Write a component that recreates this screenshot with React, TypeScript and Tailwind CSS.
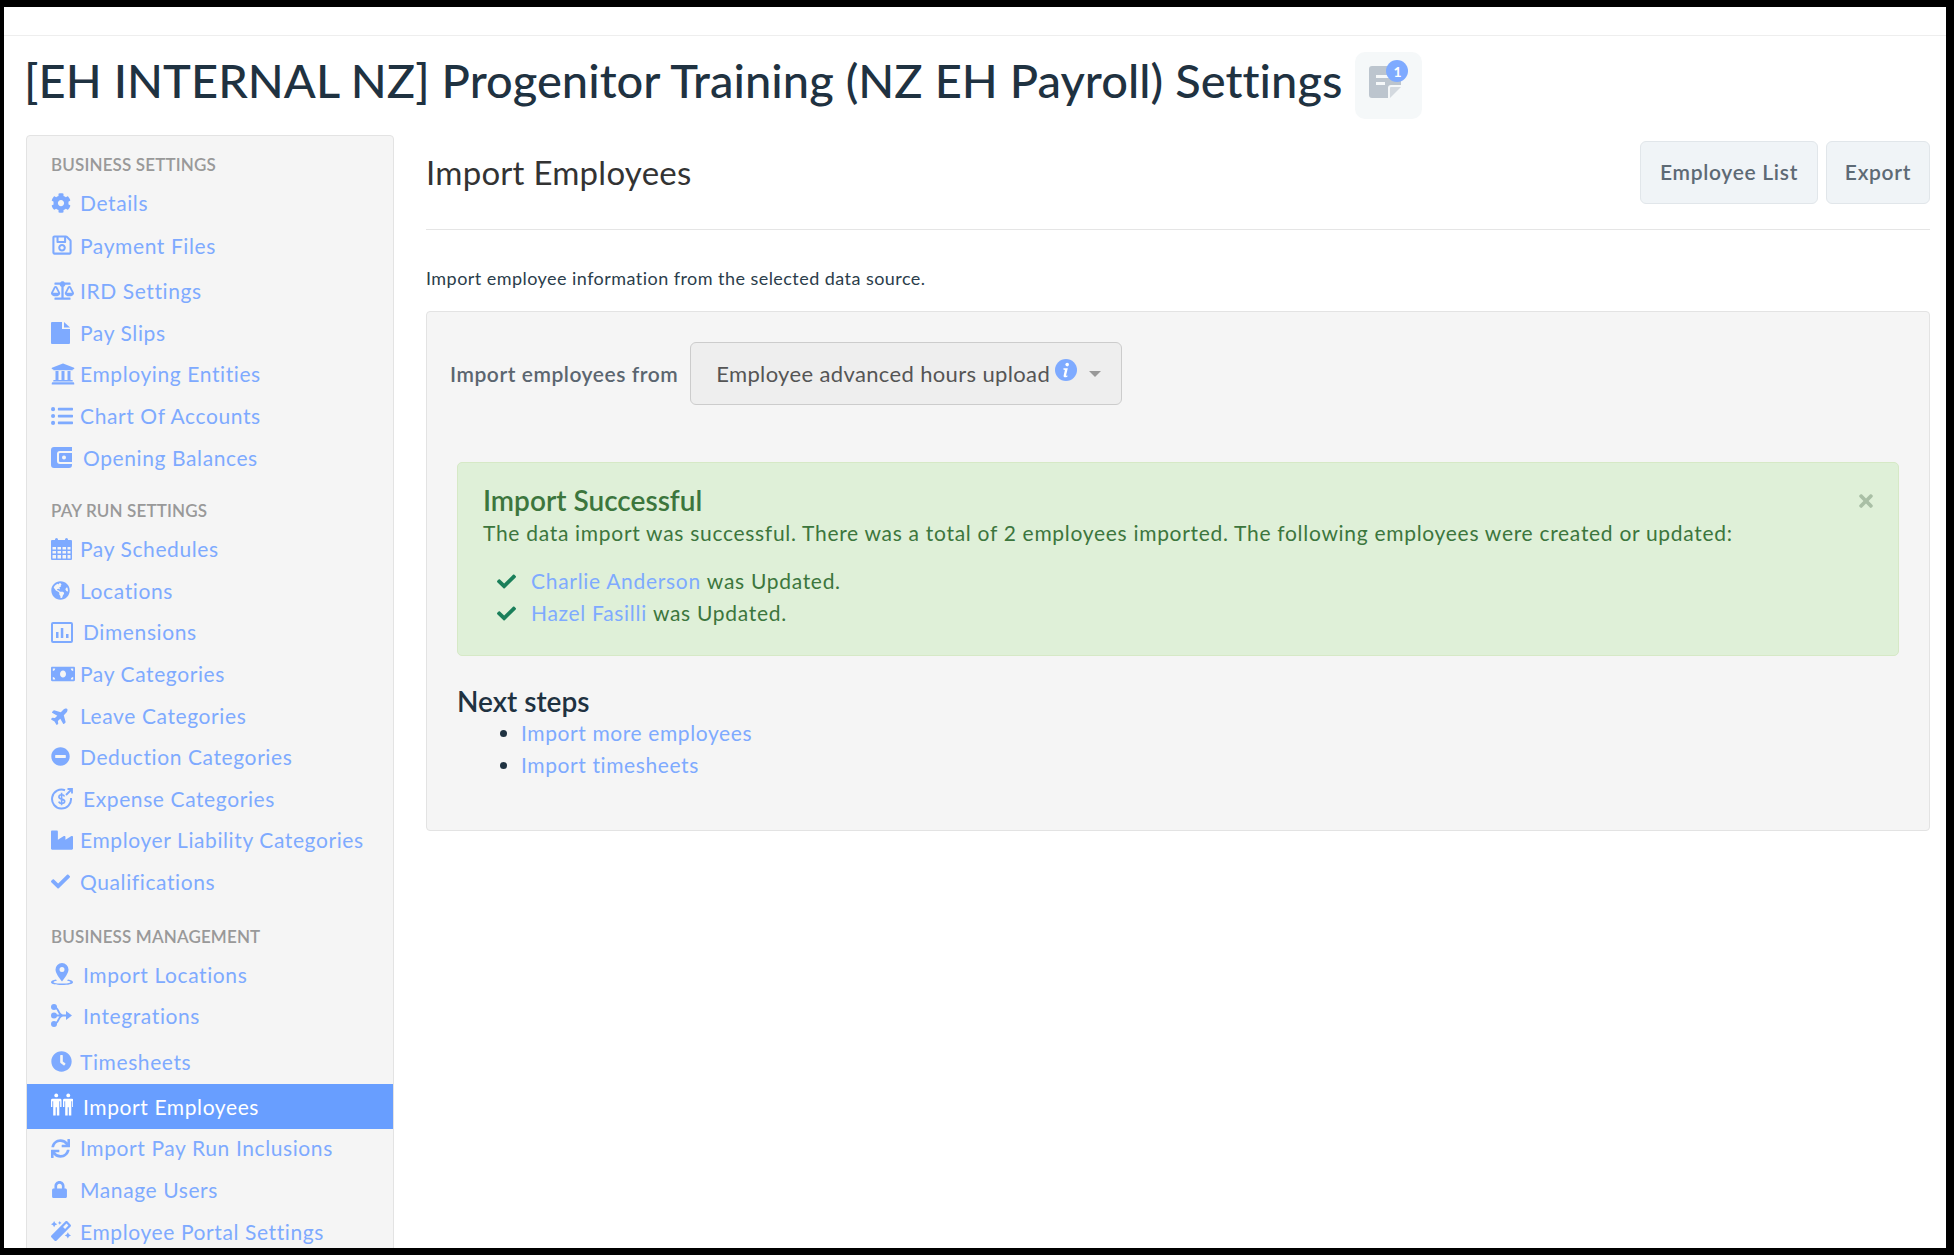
import type { ReactNode } from "react";
import {
  FaBalanceScale,
  FaCheck,
  FaClock,
  FaCog,
  FaGlobeAmericas,
  FaIndustry,
  FaListUl,
  FaLock,
  FaMagic,
  FaMinusCircle,
  FaMoneyBill,
  FaPlane,
  FaRegSave,
  FaSync,
  FaTimes,
  FaUniversity,
} from "react-icons/fa";

// icons the packs don't have in the same shape
function FileIcon() {
  return (
    <svg viewBox="0 0 19 22" className="h-[22px] w-[19px] fill-current">
      <path d="M1 0h10v7h8v14a1 1 0 0 1-1 1H1a1 1 0 0 1-1-1V1a1 1 0 0 1 1-1z" />
      <path d="M13 0l6 5.5h-6z" />
    </svg>
  );
}

function WalletIcon() {
  return (
    <svg viewBox="0 0 21 21" className="h-[21px] w-[21px] fill-current">
      <path
        fillRule="evenodd"
        d="M3 0h18v4H9a3 3 0 0 0-3 3v7a3 3 0 0 0 3 3h12v1a3 3 0 0 1-3 3H3a3 3 0 0 1-3-3V3a3 3 0 0 1 3-3z"
      />
      <path
        fillRule="evenodd"
        d="M9 6h12v9H9a1 1 0 0 1-1-1V7a1 1 0 0 1 1-1zm4 2.5a2 2 0 1 0 0 4 2 2 0 0 0 0-4z"
      />
    </svg>
  );
}

function CalendarIcon() {
  return (
    <svg viewBox="0 0 21 22" className="h-[22px] w-[21px] fill-current">
      <path
        fillRule="evenodd"
        d="M1 2h3V1.500a1.500 1.500 0 0 1 3 0V2h7V1.500a1.500 1.500 0 0 1 3 0V2h3a1 1 0 0 1 1 1v18a1 1 0 0 1-1 1H1a1 1 0 0 1-1-1V3a1 1 0 0 1 1-1zm.5 7v2.500H5V9zm5 0v2.500H10V9zm5 0v2.500H15V9zm5 0v2.500h3V9zM1.500 13v2.500H5V13zm5 0v2.500H10V13zm5 0v2.500H15V13zm5 0v2.500h3V13zM1.500 17v3.500H5V17zm5 0v3.500H10V17zm5 0v3.500H15V17zm5 0v3.500h3V17z"
      />
    </svg>
  );
}

function ChartSquareIcon() {
  return (
    <svg viewBox="0 0 22 21" className="h-[21px] w-[22px] fill-current">
      <path
        fillRule="evenodd"
        d="M2 0h18a2 2 0 0 1 2 2v17a2 2 0 0 1-2 2H2a2 2 0 0 1-2-2V2a2 2 0 0 1 2-2zm0 2v17h18V2z"
      />
      <path d="M5 10h2.500v6H5zM9.800 6h2.500v10H9.800zM15 12h2.500v4H15z" />
    </svg>
  );
}

function ExpenseIcon() {
  return (
    <svg viewBox="0 0 22 22" className="h-[22px] w-[22px] fill-none stroke-current">
      <path d="M14 2.200A9.500 9.500 0 1 0 20 10" strokeWidth="2" />
      <path d="M13.500 8.500c-.5-1.300-1.500-1.800-2.800-1.800-1.700 0-2.800.9-2.800 2.200 0 3 5.800 1.500 5.800 4.400 0 1.300-1.200 2.200-3 2.200-1.400 0-2.500-.6-3-1.900M10.600 4.800v12.400" strokeWidth="1.600" />
      <path d="M15 7l5.500-5.500M16.500 1h4.500v4.500" strokeWidth="1.800" />
    </svg>
  );
}

function PinIcon() {
  return (
    <svg viewBox="0 0 22 22" className="h-[22px] w-[22px] fill-current">
      <path
        fillRule="evenodd"
        d="M11 0a6.500 6.500 0 0 1 6.500 6.500c0 3.500-4 9-6.500 12-2.500-3-6.500-8.500-6.500-12A6.500 6.500 0 0 1 11 0zm0 4a2.500 2.500 0 1 0 0 5 2.500 2.500 0 0 0 0-5z"
      />
      <path d="M5 16.500c-3 .5-5 1.400-5 2.700C0 21 5 22 11 22s11-1 11-2.800c0-1.300-2-2.200-5-2.700l-.9 1.300c2 .3 3.400.8 3.400 1.400 0 .8-4 1.400-8.500 1.400s-8.500-.6-8.500-1.400c0-.6 1.400-1.100 3.400-1.400z" />
    </svg>
  );
}

function IntegrationsIcon() {
  return (
    <svg viewBox="0 0 21 23" className="h-[23px] w-[21px]">
      <g className="fill-current">
        <circle cx="3" cy="3" r="3" />
        <circle cx="3" cy="11.500" r="3" />
        <circle cx="3" cy="20" r="3" />
        <path d="M15 7l6 4.500-6 4.500z" />
      </g>
      <path
        d="M3 3c5 0 4 8.500 9 8.500h4M3 20c5 0 4-8.500 9-8.500M3 11.500h10"
        className="fill-none stroke-current"
        strokeWidth="1.800"
      />
    </svg>
  );
}

function MaleIcon() {
  return (
    <svg viewBox="0 0 11 23" className="h-[23px] w-[10.500px] fill-current">
      <circle cx="5.500" cy="2" r="2" />
      <path d="M1.500 5.500h8A1.500 1.500 0 0 1 11 7v7H9.600V8h-.9v15H6.100v-8.500H4.900V23H2.300V8h-.9v6H0V7a1.500 1.500 0 0 1 1.500-1.500z" />
    </svg>
  );
}

function NoteIcon() {
  return (
    <svg viewBox="0 0 32 32" className="h-8 w-8">
      <path d="M3 0h26a3 3 0 0 1 3 3v16H22a3 3 0 0 0-3 3v10H3a3 3 0 0 1-3-3V3a3 3 0 0 1 3-3z" fill="#bcc5ce" />
      <path d="M22 21h10L21 32V22a1 1 0 0 1 1-1z" fill="#d3d9df" />
      <path d="M7 9h14v3H7zM7 16h9v3H7z" fill="#f5f8f9" />
    </svg>
  );
}

function InfoIcon() {
  return (
    <svg viewBox="0 0 22 22" className="h-[22px] w-[22px]">
      <circle cx="11" cy="11" r="11" fill="#7eaaff" />
      <circle cx="12.200" cy="5.600" r="1.800" fill="#fff" />
      <path d="M8.500 9.300h4.300l-1.700 7c-.1.500.4.600 1.500.2l-.3 1.200c-2.200 1-4 .7-3.700-.9l1.300-5.900-1.600-.3z" fill="#fff" />
    </svg>
  );
}

type NavItem = { label: string; icon: ReactNode; iconBox: string; rowClass?: string; active?: boolean };

const businessSettings: NavItem[] = [
  { label: "Details", icon: <FaCog size={20} />, iconBox: "w-[29px]" },
  { label: "Payment Files", icon: <FaRegSave size={22} />, iconBox: "w-[29px]", rowClass: "mt-px" },
  { label: "IRD Settings", icon: <FaBalanceScale size={23} />, iconBox: "w-[29px]", rowClass: "mt-1" },
  { label: "Pay Slips", icon: <FileIcon />, iconBox: "w-[29px]" },
  { label: "Employing Entities", icon: <FaUniversity size={24} />, iconBox: "w-[29px]" },
  { label: "Chart Of Accounts", icon: <FaListUl size={22} />, iconBox: "w-[29px]" },
  { label: "Opening Balances", icon: <WalletIcon />, iconBox: "w-[32px]" },
];

const payRunSettings: NavItem[] = [
  { label: "Pay Schedules", icon: <CalendarIcon />, iconBox: "w-[29px]" },
  { label: "Locations", icon: <FaGlobeAmericas size={19} />, iconBox: "w-[29px]" },
  { label: "Dimensions", icon: <ChartSquareIcon />, iconBox: "w-[32px]" },
  { label: "Pay Categories", icon: <FaMoneyBill size={24} />, iconBox: "w-[29px]" },
  { label: "Leave Categories", icon: <FaPlane size={19} className="-rotate-45" />, iconBox: "w-[29px]" },
  { label: "Deduction Categories", icon: <FaMinusCircle size={19} />, iconBox: "w-[29px]" },
  { label: "Expense Categories", icon: <ExpenseIcon />, iconBox: "w-[32px]" },
  { label: "Employer Liability Categories", icon: <FaIndustry size={22} />, iconBox: "w-[29px]" },
  { label: "Qualifications", icon: <FaCheck size={19} />, iconBox: "w-[29px]" },
];

const businessManagement: NavItem[] = [
  { label: "Import Locations", icon: <PinIcon />, iconBox: "w-[32px]" },
  { label: "Integrations", icon: <IntegrationsIcon />, iconBox: "w-[32px]" },
  { label: "Timesheets", icon: <FaClock size={21} />, iconBox: "w-[29px]", rowClass: "mt-1" },
  {
    label: "Import Employees",
    icon: (
      <span className="-mt-1 flex gap-px">
        <MaleIcon />
        <MaleIcon />
      </span>
    ),
    iconBox: "w-[32px]",
    rowClass: "mt-[2px]",
    active: true,
  },
  { label: "Import Pay Run Inclusions", icon: <FaSync size={19} />, iconBox: "w-[29px]", rowClass: "-mt-[2px]" },
  { label: "Manage Users", icon: <FaLock size={17} />, iconBox: "w-[29px]" },
  { label: "Employee Portal Settings", icon: <FaMagic size={20} />, iconBox: "w-[29px]" },
];

function NavRow({ item }: { item: NavItem }) {
  return (
    <a
      className={`flex items-center pl-6 text-[21px] tracking-[0.6px] ${
        item.active ? "h-[45px] bg-[#689eff] text-white" : "h-[41.6px] text-[#7eaaff]"
      } ${item.rowClass ?? ""}`}
    >
      <span className={`flex shrink-0 items-center ${item.iconBox}`}>{item.icon}</span>
      {item.label}
    </a>
  );
}

function NavSection({ title, items, className }: { title: string; items: NavItem[]; className?: string }) {
  return (
    <div className={className}>
      <div className="flex h-[24px] items-center pl-6 text-[17px] font-semibold tracking-[0.15px] text-[#999999]">{title}</div>
      <div className="mt-[5px]">
        {items.map((item) => (
          <NavRow key={item.label} item={item} />
        ))}
      </div>
    </div>
  );
}

export default function App() {
  return (
    <div className="h-[1255px] w-[1954px] overflow-hidden bg-black pb-[7px] pl-1 pr-2 pt-[7px] font-['Lato',sans-serif]">
      <div className="h-full overflow-hidden bg-white">
        <div className="h-[29px] border-b border-[#eeeeee]" />

        <div className="flex items-center pl-5 pt-4">
          <h1 className="pb-[10px] text-[47px] font-medium leading-[57px] tracking-[0.05px] text-[#1f3241]">
            [EH INTERNAL NZ] Progenitor Training (NZ EH Payroll) Settings
          </h1>
          <button className="relative ml-[13px] flex h-[67px] w-[67px] items-center justify-center rounded-[10px] bg-[#f5f8f9] pb-[7px] pr-[7px]">
            <NoteIcon />
            <span className="absolute left-[31px] top-[8px] flex h-[22px] w-[22px] items-center justify-center rounded-full bg-[#7eaaff] text-[14px] font-bold text-white">
              1
            </span>
          </button>
        </div>

        <div className="mt-4 flex items-start pl-[22px]">
          <aside className="h-[1200px] w-[368px] shrink-0 rounded-t border border-[#e3e3e3] bg-[#f5f5f5] pt-[17px]">
            <NavSection title="BUSINESS SETTINGS" items={businessSettings} />
            <NavSection title="PAY RUN SETTINGS" items={payRunSettings} className="mt-[21px]" />
            <NavSection title="BUSINESS MANAGEMENT" items={businessManagement} className="mt-[22px]" />
          </aside>

          <main className="ml-8 w-[1504px] shrink-0">
            <div className="flex h-[95px] items-start justify-between border-b border-[#e5e5e5] pt-[6px]">
              <h2 className="mt-[12px] text-[33px] font-normal leading-[38px] tracking-[0.25px] text-[#333333]">Import Employees</h2>
              <div className="flex gap-2">
                <button className="h-[63px] w-[178px] rounded-md border border-[#e1e6ea] bg-[#f0f4f7] pb-[2px] text-[21px] font-semibold tracking-[0.7px] text-[#5d6a75]">
                  Employee List
                </button>
                <button className="h-[63px] w-[104px] rounded-md border border-[#e1e6ea] bg-[#f0f4f7] pb-[2px] text-[21px] font-semibold tracking-[0.7px] text-[#5d6a75]">
                  Export
                </button>
              </div>
            </div>

            <p className="mt-[35px] text-[18px] leading-[26px] tracking-[0.45px] text-[#2b3d4b]">
              Import employee information from the selected data source.
            </p>

            <section className="mt-5 h-[520px] rounded border border-[#e3e3e3] bg-[#f5f5f5]">
              <div className="flex items-center pl-[23px] pt-[30px]">
                <span className="text-[21px] font-semibold tracking-[0.55px] text-[#5b6670]">Import employees from</span>
                <div className="ml-3 flex h-[63px] w-[432px] items-center rounded-md border border-[#cccccc] bg-[#eeeeee] pl-[25px] text-[22px] tracking-[0.36px] text-[#555555]">
                  Employee advanced hours upload
                  <span className="-mt-2 ml-[5px]">
                    <InfoIcon />
                  </span>
                  <svg viewBox="0 0 12 6" className="ml-3 h-[6px] w-3 fill-[#999999]">
                    <path d="M0 0h12L6 6z" />
                  </svg>
                </div>
              </div>

              <div className="relative ml-[30px] mt-[57px] h-[194px] w-[1442px] rounded-[5px] border border-[#d6e9c6] bg-[#dff0d8] px-[25px] pt-[20px] text-[#3c763d]">
                <FaTimes size={20} className="absolute right-[22px] top-[28px] text-[#a9bfa5]" />
                <h3 className="text-[28px] font-semibold leading-[34px]">Import Successful</h3>
                <p className="text-[21px] leading-[32px] tracking-[0.7px]">
                  The data import was successful. There was a total of 2 employees imported. The following employees were created or updated:
                </p>
                <ul className="mt-[16px] text-[21px] leading-[32px] tracking-[0.7px]">
                  <li className="flex items-center pl-[14px]">
                    <FaCheck size={19} className="mr-[15px] text-[#1a7f5a]" />
                    <a className="mr-[6px] text-[#7eaaff]">Charlie Anderson</a> was Updated.
                  </li>
                  <li className="flex items-center pl-[14px]">
                    <FaCheck size={19} className="mr-[15px] text-[#1a7f5a]" />
                    <a className="mr-[6px] text-[#7eaaff]">Hazel Fasilli</a> was Updated.
                  </li>
                </ul>
              </div>

              <h3 className="ml-[30px] mt-[29px] text-[28px] font-semibold leading-[32px] text-[#1f3241]">Next steps</h3>
              <ul className="ml-[94px] list-disc text-[21px] leading-[32px] tracking-[0.6px] text-[#1f3241]">
                <li className="text-[#7eaaff] marker:text-[#1f3241]">Import more employees</li>
                <li className="text-[#7eaaff] marker:text-[#1f3241]">Import timesheets</li>
              </ul>
            </section>
          </main>
        </div>
      </div>
    </div>
  );
}
